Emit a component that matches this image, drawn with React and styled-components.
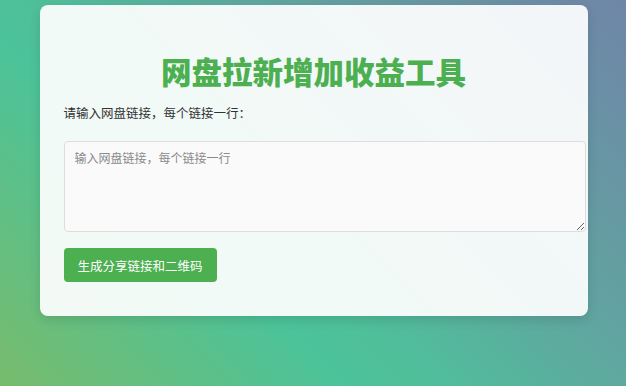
import React, { useState } from 'react';
import styled, { createGlobalStyle } from 'styled-components';

const GlobalStyle = createGlobalStyle`
	html, body {
		margin: 0;
		padding: 0;
		height: 100%;
	}
	body {
		font-family: "Noto Sans CJK SC", "Noto Sans", sans-serif;
		background: linear-gradient(45deg, #78bb6c 0%, #4cc39a 34%, #4fbf9a 42%, #60a6a0 64%, #7085a8 100%);
		background-attachment: fixed;
		min-height: 386px;
	}
	#root {
		min-height: 100%;
	}
`;

const Page = styled.div`
	display: flex;
	justify-content: center;
	padding: 5px 0 0 1px;
`;

const Card = styled.div`
	width: 500px;
	padding: 24px;
	background: rgba(255, 255, 255, 0.92);
	border-radius: 8px;
	box-shadow: 0 4px 12px rgba(0, 0, 0, 0.12);
`;

const Title = styled.h1`
	margin: 22px 0 12px;
	font-size: 30.5px;
	line-height: 41px;
	font-weight: 900;
	color: #4caf50;
	text-align: center;
`;

const Label = styled.label`
	display: block;
	font-size: 12.5px;
	line-height: 18px;
	color: #333;
	margin-bottom: 19px;
`;

const TextArea = styled.textarea`
	display: block;
	width: 100%;
	height: 73px;
	padding: 8px 10px;
	border: 1px solid #ddd;
	border-radius: 4px;
	background: #fafafa;
	font-family: inherit;
	font-size: 12px;
	line-height: 16px;
	color: #333;
	outline: none;

	&::placeholder {
		color: #8a8a8a;
	}
`;

const Button = styled.button`
	display: block;
	margin: 16px 0 10px;
	height: 34px;
	padding: 0 14px;
	border: 0;
	border-radius: 4px;
	background: #4caf50;
	color: #fff;
	font-family: inherit;
	font-size: 12.5px;
	cursor: pointer;

	&:hover {
		background: #45a049;
	}
`;

const App = () => {
	const [links, setLinks] = useState('');

	return (
		<>
			<GlobalStyle />
			<Page>
				<Card>
					<Title>网盘拉新增加收益工具</Title>
					<Label htmlFor='links'>请输入网盘链接，每个链接一行：</Label>
					<TextArea
						id='links'
						placeholder='输入网盘链接，每个链接一行'
						value={links}
						onChange={(e) => setLinks(e.target.value)}
					/>
					<Button type='button'>生成分享链接和二维码</Button>
				</Card>
			</Page>
		</>
	);
};

export default App;
